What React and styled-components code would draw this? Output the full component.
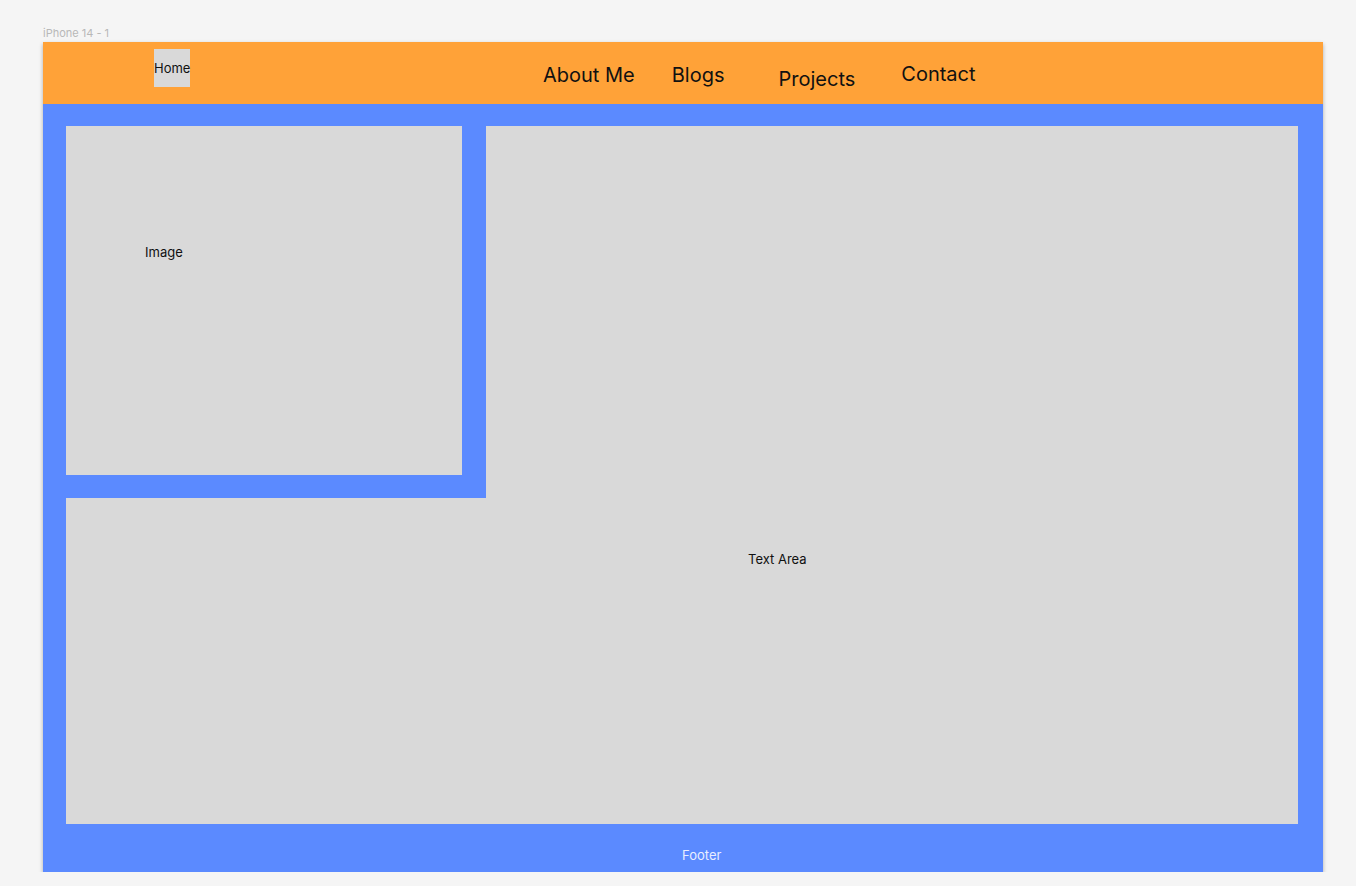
import React from "react";
import styled, { createGlobalStyle } from "styled-components";

const Global = createGlobalStyle`
  html, body { margin: 0; padding: 0; background: #f5f5f5; }
  body { font-family: Inter, "Noto Sans", sans-serif; }
`;

const Page = styled.div`
  padding: 25px 0 0 43px;
`;

const FrameLabel = styled.div`
  font-size: 11px;
  line-height: 16px;
  height: 17px;
  color: #b8b8b8;
`;

const Frame = styled.div`
  width: 1280px;
  height: 830px;
  display: flex;
  flex-direction: column;
  box-shadow: 0 2px 4px rgba(0, 0, 0, 0.3);
`;

const Header = styled.header`
  height: 62px;
  flex: none;
  background: #ffa238;
  display: flex;
  align-items: flex-start;
`;

const HomeButton = styled.div`
  margin: 7px 0 0 111px;
  width: 36px;
  height: 38px;
  background: #d9d9d9;
  font-size: 13px;
  line-height: 38px;
  color: #111;
  white-space: nowrap;
  overflow: visible;
`;

const NavItem = styled.div`
  margin-top: ${(p) => p.$top}px;
  margin-left: ${(p) => p.$left}px;
  font-size: 20px;
  line-height: 24px;
  color: #111;
  white-space: nowrap;
`;

const Main = styled.main`
  flex: 1;
  background: #5b8aff;
  padding: 22px 25px 0 23px;
  display: grid;
  grid-template-columns: 420px 812px;
  grid-template-rows: 372px 326px;
`;

const ImageCell = styled.div`
  padding: 0 24px 23px 0;
`;

const GrayBox = styled.div`
  background: #d9d9d9;
  font-size: 13px;
  line-height: 16px;
  color: #111;
`;

const ImageBox = styled(GrayBox)`
  height: 100%;
  padding: 118px 0 0 79px;
  box-sizing: border-box;
`;

const TextTop = styled(GrayBox)`
  grid-column: 2;
  grid-row: 1;
`;

const TextBottom = styled(GrayBox)`
  grid-column: 1 / 3;
  grid-row: 2;
  padding: 53px 0 0 682px;
`;

const Footer = styled.footer`
  height: 48px;
  flex: none;
  background: #5b8aff;
  box-sizing: border-box;
  padding: 23px 0 0 639px;
  font-size: 13px;
  line-height: 16px;
  color: #e9eeff;
`;

const navItems = [
  { label: "About Me", left: 353, top: 21 },
  { label: "Blogs", left: 37, top: 21 },
  { label: "Projects", left: 54, top: 25 },
  { label: "Contact", left: 46, top: 20 },
];

export default function App() {
  return (
    <>
      <Global />
      <Page>
        <FrameLabel>iPhone 14 - 1</FrameLabel>
        <Frame>
          <Header>
            <HomeButton>Home</HomeButton>
            {navItems.map((n) => (
              <NavItem key={n.label} $left={n.left} $top={n.top}>
                {n.label}
              </NavItem>
            ))}
          </Header>
          <Main>
            <ImageCell>
              <ImageBox>Image</ImageBox>
            </ImageCell>
            <TextTop />
            <TextBottom>Text Area</TextBottom>
          </Main>
          <Footer>Footer</Footer>
        </Frame>
      </Page>
    </>
  );
}
